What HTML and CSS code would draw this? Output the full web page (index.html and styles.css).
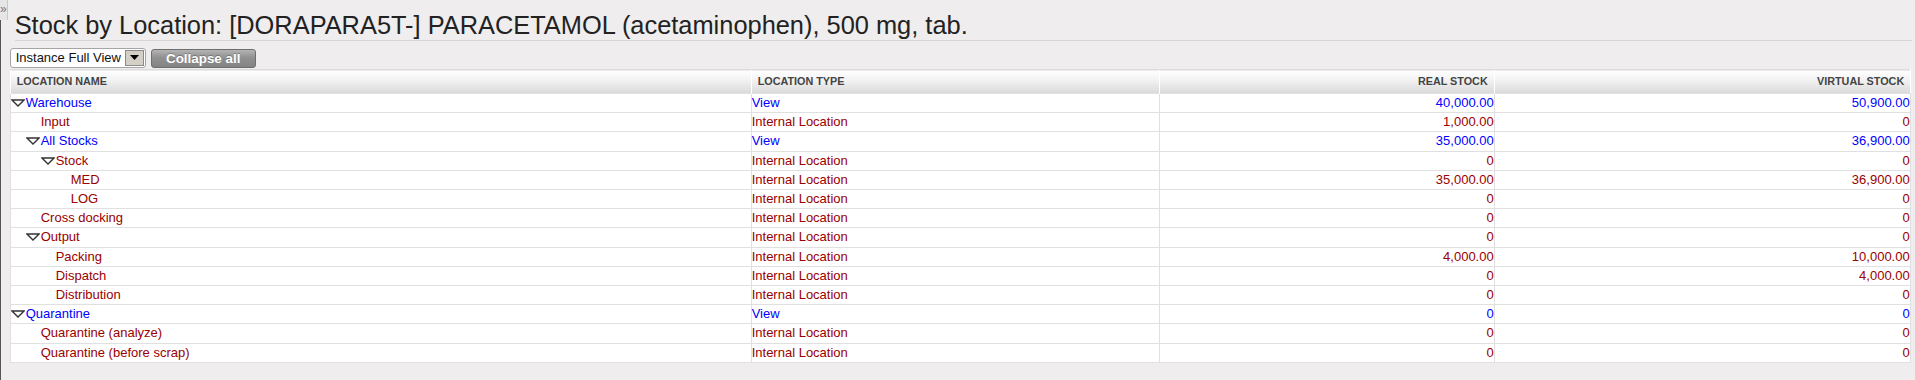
FILE: index.html
```html
<!doctype html>
<html lang="en">
	<head>
		<meta charset="utf-8">
		<link rel="stylesheet" href="styles.css">
		<title>Stock by Location</title>
	</head>
	<body>
	<div class="shell">
		<div class="rail">
			<div class="rail-toggle">&raquo;</div>
			<div class="rail-line"></div>
		</div>
		<div class="main">
			<h1 class="page-title">Stock by Location: [DORAPARA5T-] PARACETAMOL (acetaminophen), 500 mg, tab.</h1>
			<div class="toolbar">
				<div class="picker">
					<select class="picker-select">
						<option>Instance Full View</option>
					</select>
					<span class="picker-arrow"><svg width="9" height="5" viewBox="0 0 9 5"><polygon points="0,0 9,0 4.5,5" fill="#000"/></svg></span>
				</div>
				<button class="btn-collapse" type="button">Collapse all</button>
			</div>
			<table class="stock">
				<colgroup>
					<col class="c-name">
					<col class="c-type">
					<col class="c-real">
					<col class="c-virtual">
				</colgroup>
				<thead>
					<tr>
						<th>Location Name</th>
						<th>Location Type</th>
						<th class="num">Real Stock</th>
						<th class="num">Virtual Stock</th>
					</tr>
				</thead>
				<tbody>
					<tr class="view">
						<td><span class="node lvl0"><span class="tw open"></span>Warehouse</span></td>
						<td>View</td>
						<td class="num">40,000.00</td>
						<td class="num">50,900.00</td>
					</tr>
					<tr>
						<td><span class="node lvl1"><span class="tw"></span>Input</span></td>
						<td>Internal Location</td>
						<td class="num">1,000.00</td>
						<td class="num">0</td>
					</tr>
					<tr class="view">
						<td><span class="node lvl1"><span class="tw open"></span>All Stocks</span></td>
						<td>View</td>
						<td class="num">35,000.00</td>
						<td class="num">36,900.00</td>
					</tr>
					<tr>
						<td><span class="node lvl2"><span class="tw open"></span>Stock</span></td>
						<td>Internal Location</td>
						<td class="num">0</td>
						<td class="num">0</td>
					</tr>
					<tr>
						<td><span class="node lvl3"><span class="tw"></span>MED</span></td>
						<td>Internal Location</td>
						<td class="num">35,000.00</td>
						<td class="num">36,900.00</td>
					</tr>
					<tr>
						<td><span class="node lvl3"><span class="tw"></span>LOG</span></td>
						<td>Internal Location</td>
						<td class="num">0</td>
						<td class="num">0</td>
					</tr>
					<tr>
						<td><span class="node lvl1"><span class="tw"></span>Cross docking</span></td>
						<td>Internal Location</td>
						<td class="num">0</td>
						<td class="num">0</td>
					</tr>
					<tr>
						<td><span class="node lvl1"><span class="tw open"></span>Output</span></td>
						<td>Internal Location</td>
						<td class="num">0</td>
						<td class="num">0</td>
					</tr>
					<tr>
						<td><span class="node lvl2"><span class="tw"></span>Packing</span></td>
						<td>Internal Location</td>
						<td class="num">4,000.00</td>
						<td class="num">10,000.00</td>
					</tr>
					<tr>
						<td><span class="node lvl2"><span class="tw"></span>Dispatch</span></td>
						<td>Internal Location</td>
						<td class="num">0</td>
						<td class="num">4,000.00</td>
					</tr>
					<tr>
						<td><span class="node lvl2"><span class="tw"></span>Distribution</span></td>
						<td>Internal Location</td>
						<td class="num">0</td>
						<td class="num">0</td>
					</tr>
					<tr class="view">
						<td><span class="node lvl0"><span class="tw open"></span>Quarantine</span></td>
						<td>View</td>
						<td class="num">0</td>
						<td class="num">0</td>
					</tr>
					<tr>
						<td><span class="node lvl1"><span class="tw"></span>Quarantine (analyze)</span></td>
						<td>Internal Location</td>
						<td class="num">0</td>
						<td class="num">0</td>
					</tr>
					<tr>
						<td><span class="node lvl1"><span class="tw"></span>Quarantine (before scrap)</span></td>
						<td>Internal Location</td>
						<td class="num">0</td>
						<td class="num">0</td>
					</tr>
				</tbody>
			</table>
		</div>
	</div>
	</body>
</html>
```

FILE: styles.css
```css
body {
	background: #efeded;
	color: #222;
	font: 13px 'Liberation Sans', Arial, sans-serif;
	margin: 0;
}

.shell {
	display: flex;
	min-height: 380px;
}

.rail {
	display: flex;
	flex-direction: column;
	width: 8px;
}

.rail-toggle {
	background: #e6e6e6;
	border-right: 1px solid #c8c8c8;
	color: #777;
	font-size: 12px;
	height: 20px;
	line-height: 18px;
	overflow: hidden;
}

.rail-line {
	border-left: 1px solid #555;
	flex: 1;
}

.main {
	flex: 1;
	padding: 0 5px 0 2px;
}

.page-title {
	border-bottom: 1px solid #d6d4d4;
	font-size: 25.4px;
	font-weight: normal;
	line-height: 28px;
	margin: 0 -1px 0 5px;
	padding: 11px 0 1px;
}

.toolbar {
	align-items: center;
	display: flex;
	gap: 5px;
	height: 21px;
	margin-top: 6px;
}

.picker {
	background: #fff;
	border: 1px solid #a5a5a5;
	border-radius: 3px;
	display: flex;
	align-items: center;
	height: 18px;
	padding-right: 1px;
}

.picker-select {
	-webkit-appearance: none;
	appearance: none;
	background: transparent;
	border: 0;
	color: #111;
	font: 13px 'Liberation Sans', Arial, sans-serif;
	height: 18px;
	outline: none;
	padding: 0 0 0 5px;
	width: 114px;
}

.picker-arrow {
	align-items: center;
	background: #d4d0c8;
	border: 1px solid #8a8a8a;
	display: flex;
	height: 14px;
	justify-content: center;
	width: 17px;
}

.btn-collapse {
	background: linear-gradient(#b4b4b4, #909090 45%, #848484);
	border: 1px solid #6e6e6e;
	border-radius: 3px;
	color: #fff;
	font: bold 13.4px 'Liberation Sans', Arial, sans-serif;
	height: 19px;
	margin-top: 1px;
	padding: 0;
	text-shadow: 0 -1px 0 rgba(0, 0, 0, .25);
	width: 105px;
}

.stock {
	background: #fff;
	border-collapse: collapse;
	border-spacing: 0;
	margin-top: 1px;
	table-layout: fixed;
	width: 1900px;
}

.c-name { width: 741px; }
.c-type { width: 408px; }
.c-real { width: 335px; }
.c-virtual { width: 416px; }

.stock th {
	background: linear-gradient(#fff, #f1f1f1 45%, #d9d9d9);
	border-left: 1px solid #fff;
	border-top: 1px solid #dcdcdc;
	color: #444;
	font-size: 10.8px;
	font-weight: bold;
	line-height: 23px;
	padding: 0 6px;
	text-align: left;
	text-transform: uppercase;
}

.stock td {
	border: 1px solid #e0e0e0;
	color: #990000;
	line-height: 18.2px;
	padding: 0;
	white-space: nowrap;
}

.stock .num {
	text-align: right;
}

.stock tr.view td {
	color: #0000ff;
}

.node {
	display: inline-block;
}

.lvl1 { padding-left: 15px; }
.lvl2 { padding-left: 30px; }
.lvl3 { padding-left: 45px; }

.tw {
	display: inline-block;
	height: 8px;
	width: 15px;
}

.tw.open {
	background: no-repeat 0 0 / 14px 8px url("data:image/svg+xml,%3Csvg xmlns='http://www.w3.org/2000/svg' width='14' height='8' viewBox='0 0 14 8'%3E%3Cpolygon points='1,1 13,1 7,7' fill='%23fff' stroke='%23333' stroke-width='1.4' stroke-linejoin='miter'/%3E%3C/svg%3E");
}
```
